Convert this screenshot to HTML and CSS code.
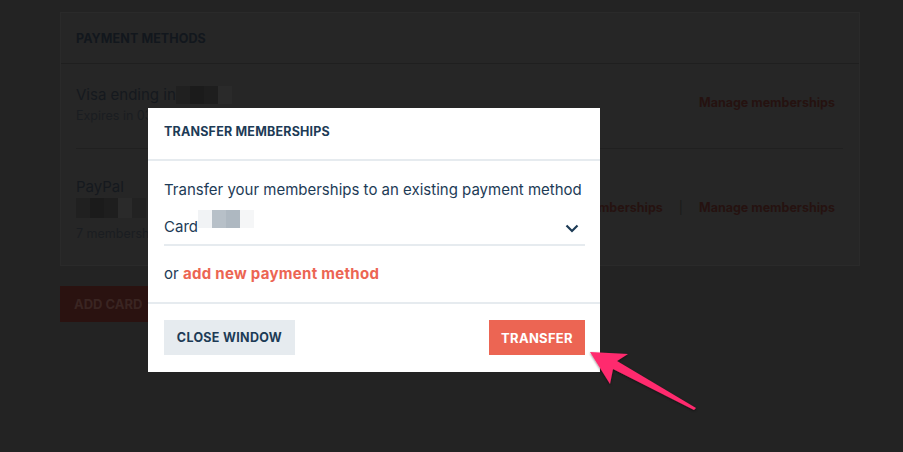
FILE: index.html
```html
<!DOCTYPE html>
<html>
<head>
<meta charset="utf-8">
<link rel="stylesheet" href="styles.css">
</head>
<body>
<div class="page">
  <section class="card">
    <div class="card-head">PAYMENT METHODS</div>
    <div class="row">
      <div class="info">
        <div class="name">Visa ending in<span class="mosaic dark"><i></i><i></i><i></i><i></i></span></div>
        <div class="sub">Expires in 03/2021</div>
      </div>
      <div class="links"><a>Manage memberships</a></div>
    </div>
    <div class="row last">
      <div class="info">
        <div class="name">PayPal</div>
        <div class="mosaic dark wide"><i></i><i></i><i></i><i></i><i></i></div>
        <div class="sub">7 memberships</div>
      </div>
      <div class="links"><a>Manage memberships</a><span class="sep">|</span><a>Manage memberships</a></div>
    </div>
  </section>
  <button class="add">ADD CARD</button>
</div>

<div class="modal">
  <div class="m-head">TRANSFER MEMBERSHIPS</div>
  <div class="m-body">
    <p class="lead">Transfer your memberships to an existing payment method</p>
    <div class="select">
      <span class="card-label">Card<span class="mosaic light"><i></i><i></i><i></i><i></i></span></span>
      <svg class="chev" width="14" height="9" viewBox="0 0 14 9"><path d="M1.5 1.5 L7 7 L12.5 1.5" fill="none" stroke="#1d3b56" stroke-width="2.2"/></svg>
    </div>
    <p class="or">or <a>add new payment method</a></p>
  </div>
  <div class="m-foot">
    <button class="btn close">CLOSE WINDOW</button>
    <button class="btn transfer">TRANSFER</button>
  </div>
</div>

<svg class="arrow" width="130" height="80" viewBox="0 0 130 80">
  <defs>
    <filter id="sh" x="-20%" y="-20%" width="140%" height="140%">
      <feDropShadow dx="0" dy="1" stdDeviation="1" flood-color="#000" flood-opacity="0.5"/>
    </filter>
  </defs>
  <path filter="url(#sh)" d="M10 12 L48 14 L37 21 L116 68 L114 70 L33 29 L30 44 Z" fill="#ff2c6e"/>
</svg>
</body>
</html>
```
FILE: styles.css
```css
* { box-sizing: border-box; }
html, body { margin: 0; height: 100%; }
body {
  background: #232323;
  font-family: "Inter", "Open Sans", sans-serif;
  overflow: hidden;
}
.page { padding: 12px 43px 0 60px; }
.card {
  background: #262626;
  border: 1px solid #2a2a2a;
  height: 254px;
}
.card-head {
  height: 51px;
  border-bottom: 1px solid #1f1f1f;
  padding: 18px 15px 0;
  font-size: 12.5px;
  font-weight: 700;
  color: #12171d;
  letter-spacing: 0.1px;
}
.row {
  margin: 0 16px 0 15px;
  display: flex;
  justify-content: space-between;
  border-bottom: 1px solid #202020;
  height: 85px;
  padding-top: 20px;
}
.row.last { border-bottom: none; padding-top: 27px; }
.name { font-size: 15px; color: #15191e; line-height: 22px; display: flex; align-items: center; }
.sub { font-size: 12.5px; color: #1a1d21; margin-top: 0; line-height: 20px; }
.links { font-size: 12.5px; font-weight: 700; color: #251210; padding-top: 11px; padding-right: 8px; }
.row.last .links { padding-top: 24px; }
.sep { color: #1a1a1a; margin: 0 16px; font-weight: 400; }
.mosaic { display: inline-flex; height: 18px; }
.mosaic i { display: block; width: 14px; height: 100%; }
.mosaic.dark i:nth-child(1) { background: #202020; }
.mosaic.dark i:nth-child(2) { background: #1b1b1b; }
.mosaic.dark i:nth-child(3) { background: #1e1e1e; }
.mosaic.dark i:nth-child(4) { background: #2a2a2a; }
.mosaic.dark.wide { height: 20px; margin: 0 0 6px; }
.mosaic.dark.wide i:nth-child(5) { background: #222; }
.add {
  margin-top: 20px;
  background: #2a1210;
  color: #3a2522;
  border: none;
  height: 36px;
  width: 100px;
  text-align: left;
  padding: 0 14px;
  font-family: inherit;
  font-size: 13px;
  font-weight: 700;
}

.modal {
  position: fixed;
  left: 148px;
  top: 108px;
  width: 452px;
  height: 264px;
  background: #fff;
  color: #1d3b56;
  display: flex;
  flex-direction: column;
}
.m-head {
  height: 53px;
  border-bottom: 2px solid #e6ebef;
  padding: 16px 16px 0;
  font-size: 12.5px;
  font-weight: 700;
  line-height: 16px;
  letter-spacing: 0.2px;
}
.m-body { padding: 0 15px 0 16px; border-bottom: 2px solid #e6ebef; height: 143px; }
.lead { margin: 20px 0 0; font-size: 15px; line-height: 18px; }
.select {
  margin-top: 16px;
  height: 31px;
  padding-top: 1px;
  border-bottom: 2px solid #e6ebef;
  display: flex;
  justify-content: space-between;
  align-items: flex-start;
  padding-right: 6px;
}
.card-label { font-size: 15px; line-height: 22px; display: flex; align-items: flex-start; }
.mosaic.light { height: 36px; margin-top: -6px; flex-wrap: wrap; width: 56px; }
.mosaic.light i { width: 14px; height: 18px; }
.mosaic.light i:nth-child(1) { background: #f1f3f5; }
.mosaic.light i:nth-child(2) { background: #b7c0c8; }
.mosaic.light i:nth-child(3) { background: #aeb8c1; }
.mosaic.light i:nth-child(4) { background: #f5f6f7; }
.chev { margin-top: 8px; }
.or { margin: 19px 0 0; font-size: 15px; line-height: 18px; }
.or a { color: #ec6553; font-weight: 700; letter-spacing: 0.3px; }
.m-foot {
  flex: 1;
  display: flex;
  justify-content: space-between;
  align-items: flex-start;
  padding: 16px 15px 0 16px;
}
.btn {
  border: none;
  height: 35px;
  font-family: inherit;
  font-size: 12.5px;
  font-weight: 700;
  letter-spacing: 0.3px;
  padding: 0 12px;
}
.close { background: #e6ebef; color: #1d3b56; width: 131px; }
.transfer { background: #ec6553; color: #fff; width: 96px; font-size: 13px; }
.arrow { position: fixed; left: 580px; top: 340px; }
```
